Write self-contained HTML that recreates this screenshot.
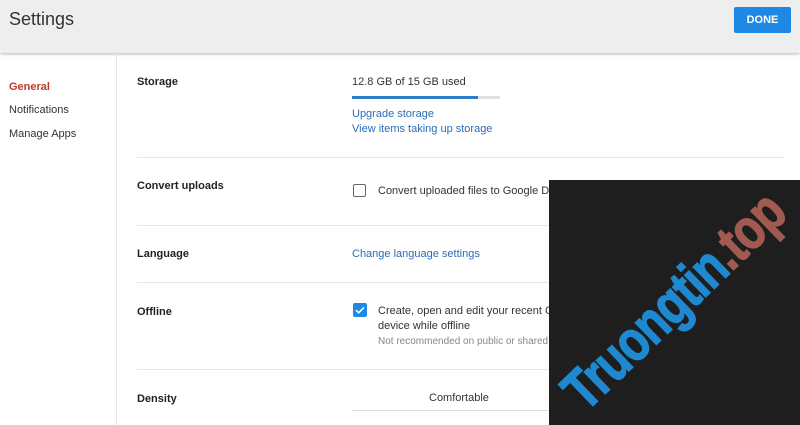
<!DOCTYPE html>
<html><head><meta charset="utf-8"><style>
*{margin:0;padding:0;box-sizing:border-box}
body{width:800px;height:425px;overflow:hidden;background:#fff;font-family:"Liberation Sans",sans-serif;position:relative;color:#222}
.hdr{position:absolute;left:0;top:0;width:800px;height:53px;background:#eeeeee;box-shadow:0 1px 3px rgba(0,0,0,.3)}
.hdr .t{position:absolute;left:9px;top:9px;font-size:18px;color:#333}
.done{position:absolute;left:734px;top:7px;width:57px;height:26px;background:#1e88e5;color:#fff;font-size:11px;font-weight:bold;text-align:center;line-height:26px;border-radius:2px}
.side{position:absolute;left:116px;top:53px;width:1px;height:372px;background:#e5e5e5}
.nav{position:absolute;left:9px;font-size:11px;color:#333}
.lbl{position:absolute;left:137px;font-size:11px;font-weight:bold;color:#222}
.hr{position:absolute;left:137px;right:15px;height:1px;background:#e6e6e6}
.tx{position:absolute;font-size:11px;color:#333}
.lnk{position:absolute;font-size:11px;color:#2a6db5}
.cb{position:absolute;width:13px;height:13px;border:1.5px solid #666;border-radius:2px}
.wm{position:absolute;left:549px;top:180px;width:251px;height:245px;background:#1e1e1e;overflow:hidden}
.wm span{position:absolute;left:-75px;top:88px;width:400px;text-align:center;font-size:57px;font-weight:bold;color:#1e88d0;transform:rotate(-44deg) scaleX(.8);white-space:nowrap;letter-spacing:-1px;-webkit-text-stroke:1.5px currentColor}
.wm b{color:#a05a50}
</style></head><body>
<div class="hdr"><div class="t">Settings</div><div class="done">DONE</div></div>
<div class="side"></div>
<div class="nav" style="top:81px;color:#c0392b;font-weight:bold">General</div>
<div class="nav" style="top:104px">Notifications</div>
<div class="nav" style="top:128px">Manage Apps</div>

<div class="lbl" style="top:76px">Storage</div>
<div class="tx" style="left:352px;top:76px">12.8 GB of 15 GB used</div>
<div style="position:absolute;left:352px;top:96px;width:148px;height:3px;background:#e0e0e0"><div style="width:126px;height:3px;background:#2a7fc7"></div></div>
<div class="lnk" style="left:352px;top:108px">Upgrade storage</div>
<div class="lnk" style="left:352px;top:123px">View items taking up storage</div>
<div class="hr" style="top:157px"></div>

<div class="lbl" style="top:180px">Convert uploads</div>
<div class="cb" style="left:353px;top:184px"></div>
<div class="tx" style="left:378px;top:185px">Convert uploaded files to Google Docs editor format</div>
<div class="hr" style="top:225px"></div>

<div class="lbl" style="top:248px">Language</div>
<div class="lnk" style="left:352px;top:248px">Change language settings</div>
<div class="hr" style="top:282px"></div>

<div class="lbl" style="top:306px">Offline</div>
<div style="position:absolute;left:353px;top:303px;width:14px;height:14px;background:#1e88e5;border-radius:2px"><svg width="14" height="14" viewBox="0 0 14 14"><path d="M3 7.2l2.6 2.6L11 4.4" stroke="#fff" stroke-width="1.6" fill="none"/></svg></div>
<div class="tx" style="left:378px;top:305px">Create, open and edit your recent Google Docs, Sheets and Slides files on this</div>
<div class="tx" style="left:378px;top:320px">device while offline</div>
<div class="tx" style="left:378px;top:336px;font-size:10px;color:#888">Not recommended on public or shared computers</div>
<div class="hr" style="top:369px"></div>

<div class="lbl" style="top:393px">Density</div>
<div class="tx" style="left:429px;top:392px">Comfortable</div>
<div style="position:absolute;left:352px;top:410px;width:200px;height:1px;background:#ddd"></div>

<div class="wm"><span>Truongtin<b>.top</b></span></div>
</body></html>
